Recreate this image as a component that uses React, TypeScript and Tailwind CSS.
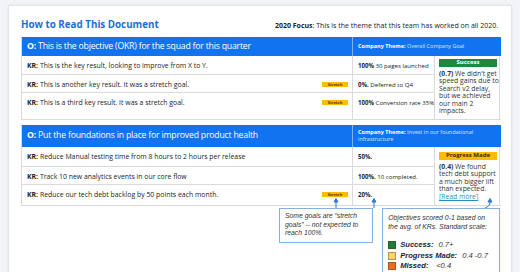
import React from 'react';

const doc = { fontFamily: '"Open Sans", "Liberation Sans", sans-serif' };
const arial = { fontFamily: '"Liberation Sans", Arial, sans-serif' };

function Stretch() {
  return (
    <span className="mr-[4px] flex h-[5px] w-[26px] items-center justify-center bg-[#fbbc04] text-[4px] font-bold leading-none text-[#5a3b00]">
      Stretch
    </span>
  );
}

function KrCell({ text, stretch, h }: { text: string; stretch?: boolean; h: string }) {
  return (
    <div className={`flex items-start border-b border-[#dadada] pl-[5px] pt-[5px] text-[6.9px] leading-[9px] text-[#222] ${h}`}>
      <span>
        <b>KR:</b> {text}
      </span>
      {stretch && <span className="ml-auto mt-[2px] flex"><Stretch /></span>}
    </div>
  );
}

function PctCell({ pct, note, h }: { pct: string; note?: string; h: string }) {
  return (
    <div className={`whitespace-nowrap border-b border-l border-[#dadada] pl-[5px] pt-[5px] text-[6.1px] leading-[9px] text-[#222] ${h}`}>
      <b>{pct}</b> {note}
    </div>
  );
}

function Section({
  objective,
  theme,
  headH,
  rows,
  status,
}: {
  objective: string;
  theme: React.ReactNode;
  headH: string;
  rows: { kr: string; stretch?: boolean; pct: string; note?: string; h: string }[];
  status: React.ReactNode;
}) {
  return (
    <div className="grid grid-cols-[330px_82px_67px] border-x border-[#dadada]">
      <div className={`flex items-center bg-[#1273f0] pl-[5px] text-[8.7px] tracking-[-0.2px] text-white ${headH}`}>
        <span>
          <b>O:</b> {objective}
        </span>
      </div>
      <div className={`col-span-2 flex items-center border-l border-[#7fb0f5] bg-[#1273f0] px-[5px] text-[5.5px] leading-[7.5px] text-[#d9e8ff] ${headH}`}>
        {theme}
      </div>
      {rows.map((r, i) => (
        <React.Fragment key={i}>
          <div style={{ gridColumn: 1, gridRow: i + 2 }}>
            <KrCell text={r.kr} stretch={r.stretch} h={r.h} />
          </div>
          <div style={{ gridColumn: 2, gridRow: i + 2 }}>
            <PctCell pct={r.pct} note={r.note} h={r.h} />
          </div>
        </React.Fragment>
      ))}
      <div
        className="border-b border-l border-[#dadada] pl-[4px] pr-[2px] pt-[3px] text-[6.8px] leading-[7.4px] text-[#333]"
        style={{ gridColumn: 3, gridRow: '2 / span 3' }}
      >
        {status}
      </div>
    </div>
  );
}

function Legend({ color, label, value }: { color: string; label: string; value: string }) {
  return (
    <div className="flex h-[10.5px] items-center">
      <span className={`mr-[4px] h-[8px] w-[8px] border border-[#333]/40 ${color}`} />
      <span className="mr-[5px] min-w-[31px] font-bold italic text-[#1c2541]">{label}</span>
      <span className="italic text-[#333]">{value}</span>
    </div>
  );
}

export default function App() {
  return (
    <div className="relative h-[272px] w-[520px] overflow-hidden bg-[#f2f4f7] pl-[8px] pt-[5px]" style={doc}>
      <div className="h-[290px] w-[504px] border border-[#e2e5e9] bg-white pl-[12px] pr-[11px] pt-[12px] shadow-[0_0_3px_rgba(0,0,0,0.06)]">
        <div className="flex h-[14px] items-end justify-between">
          <h1 className="text-[9.8px] font-bold leading-[14px] text-[#1a6fd6]">How to Read This Document</h1>
          <p className="mb-[1px] mr-[2px] text-[7px] leading-[10px] text-[#222]">
            <b>2020 Focus</b>: This is the theme that this team has worked on all 2020.
          </p>
        </div>

        <div className="mt-[5px]">
          <Section
            objective="This is the objective (OKR) for the squad for this quarter"
            headH="h-[19px]"
            theme={
              <span>
                <b className="text-white">Company Theme:</b> Overall Company Goal
              </span>
            }
            rows={[
              { kr: 'This is the key result, looking to improve from X to Y.', pct: '100%', note: '30 pages launched', h: 'h-[19px]' },
              { kr: 'This is another key result. It was a stretch goal.', stretch: true, pct: '0%.', note: 'Deferred to Q4', h: 'h-[18px]' },
              { kr: 'This is a third key result. It was a stretch goal.', stretch: true, pct: '100%', note: 'Conversion rate 35%', h: 'h-[27px]' },
            ]}
            status={
              <>
                <div className="mb-[3px] mr-[2px] flex h-[8px] items-center justify-center bg-[#1b8a3c] text-[6px] font-bold text-white">Success</div>
                <div>
                  <b>(0.7)</b> We didn't get speed gains due to Search v2 delay, but we achieved our main 2 impacts.
                </div>
              </>
            }
          />
        </div>

        <div className="mt-[5px]">
          <Section
            objective="Put the foundations in place for improved product health"
            headH="h-[22px]"
            theme={
              <span>
                <b className="text-white">Company Theme:</b> Invest in our foundational infrastructure
              </span>
            }
            rows={[
              { kr: 'Reduce Manual testing time from 8 hours to 2 hours per release', pct: '50%.', h: 'h-[20px]' },
              { kr: 'Track 10 new analytics events in our core flow', pct: '100%.', note: '10 completed.', h: 'h-[18px]' },
              { kr: 'Reduce our tech debt backlog by 50 points each month.', stretch: true, pct: '20%.', h: 'h-[21px]' },
            ]}
            status={
              <>
                <div className="mb-[3px] mr-[2px] mt-[2px] flex h-[8px] items-center justify-center bg-[#fbbc04] text-[6px] font-bold text-[#3a2a00]">
                  Progress Made
                </div>
                <div>
                  <b>(0.4)</b> We found tech debt support a much bigger lift than expected.{' '}
                  <span className="text-[#2a8fbd] underline">[Read more]</span>
                </div>
              </>
            }
          />
        </div>

        <div className="mt-[2px] flex items-start" style={arial}>
          <div className="ml-[258px] h-[35px] w-[96px] border border-[#86b1e3] pl-[5px] pt-[3px] text-[6.8px] italic leading-[8.5px] text-[#333]">
            Some goals are “stretch goals” -- not expected to reach 100%.
          </div>
          <div className="ml-[9px] w-[120px] border border-[#86b1e3] pl-[5px] pr-[8px] pt-[5px] text-[6.9px] leading-[8.5px] text-[#333]">
            <div className="italic">Objectives scored 0-1 based on the avg. of KRs. Standard scale:</div>
            <div className="mt-[9px] text-[7.6px]">
              <Legend color="bg-[#1b7f36]" label="Success:" value="0.7+" />
              <Legend color="bg-[#ffd666]" label="Progress Made:" value="0.4 -0.7" />
              <Legend color="bg-[#f26b1d]" label="Missed:" value="<0.4" />
              <Legend color="bg-[#333]" label="Dropped:" value="n/a" />
            </div>
          </div>
        </div>
      </div>

      <svg className="pointer-events-none absolute left-0 top-0" width="520" height="272" fill="none" stroke="#2f78d6" strokeWidth="1">
        <path d="M336 208 V200" />
        <path d="M334 202 L336 198.5 L338 202 Z" fill="#2f78d6" />
        <path d="M374 208 V200" />
        <path d="M372 202 L374 198.5 L376 202 Z" fill="#2f78d6" />
        <path d="M485 208 Q491 206 490 200" />
        <path d="M488 202 L490 198.5 L492 202 Z" fill="#2f78d6" />
      </svg>
    </div>
  );
}
